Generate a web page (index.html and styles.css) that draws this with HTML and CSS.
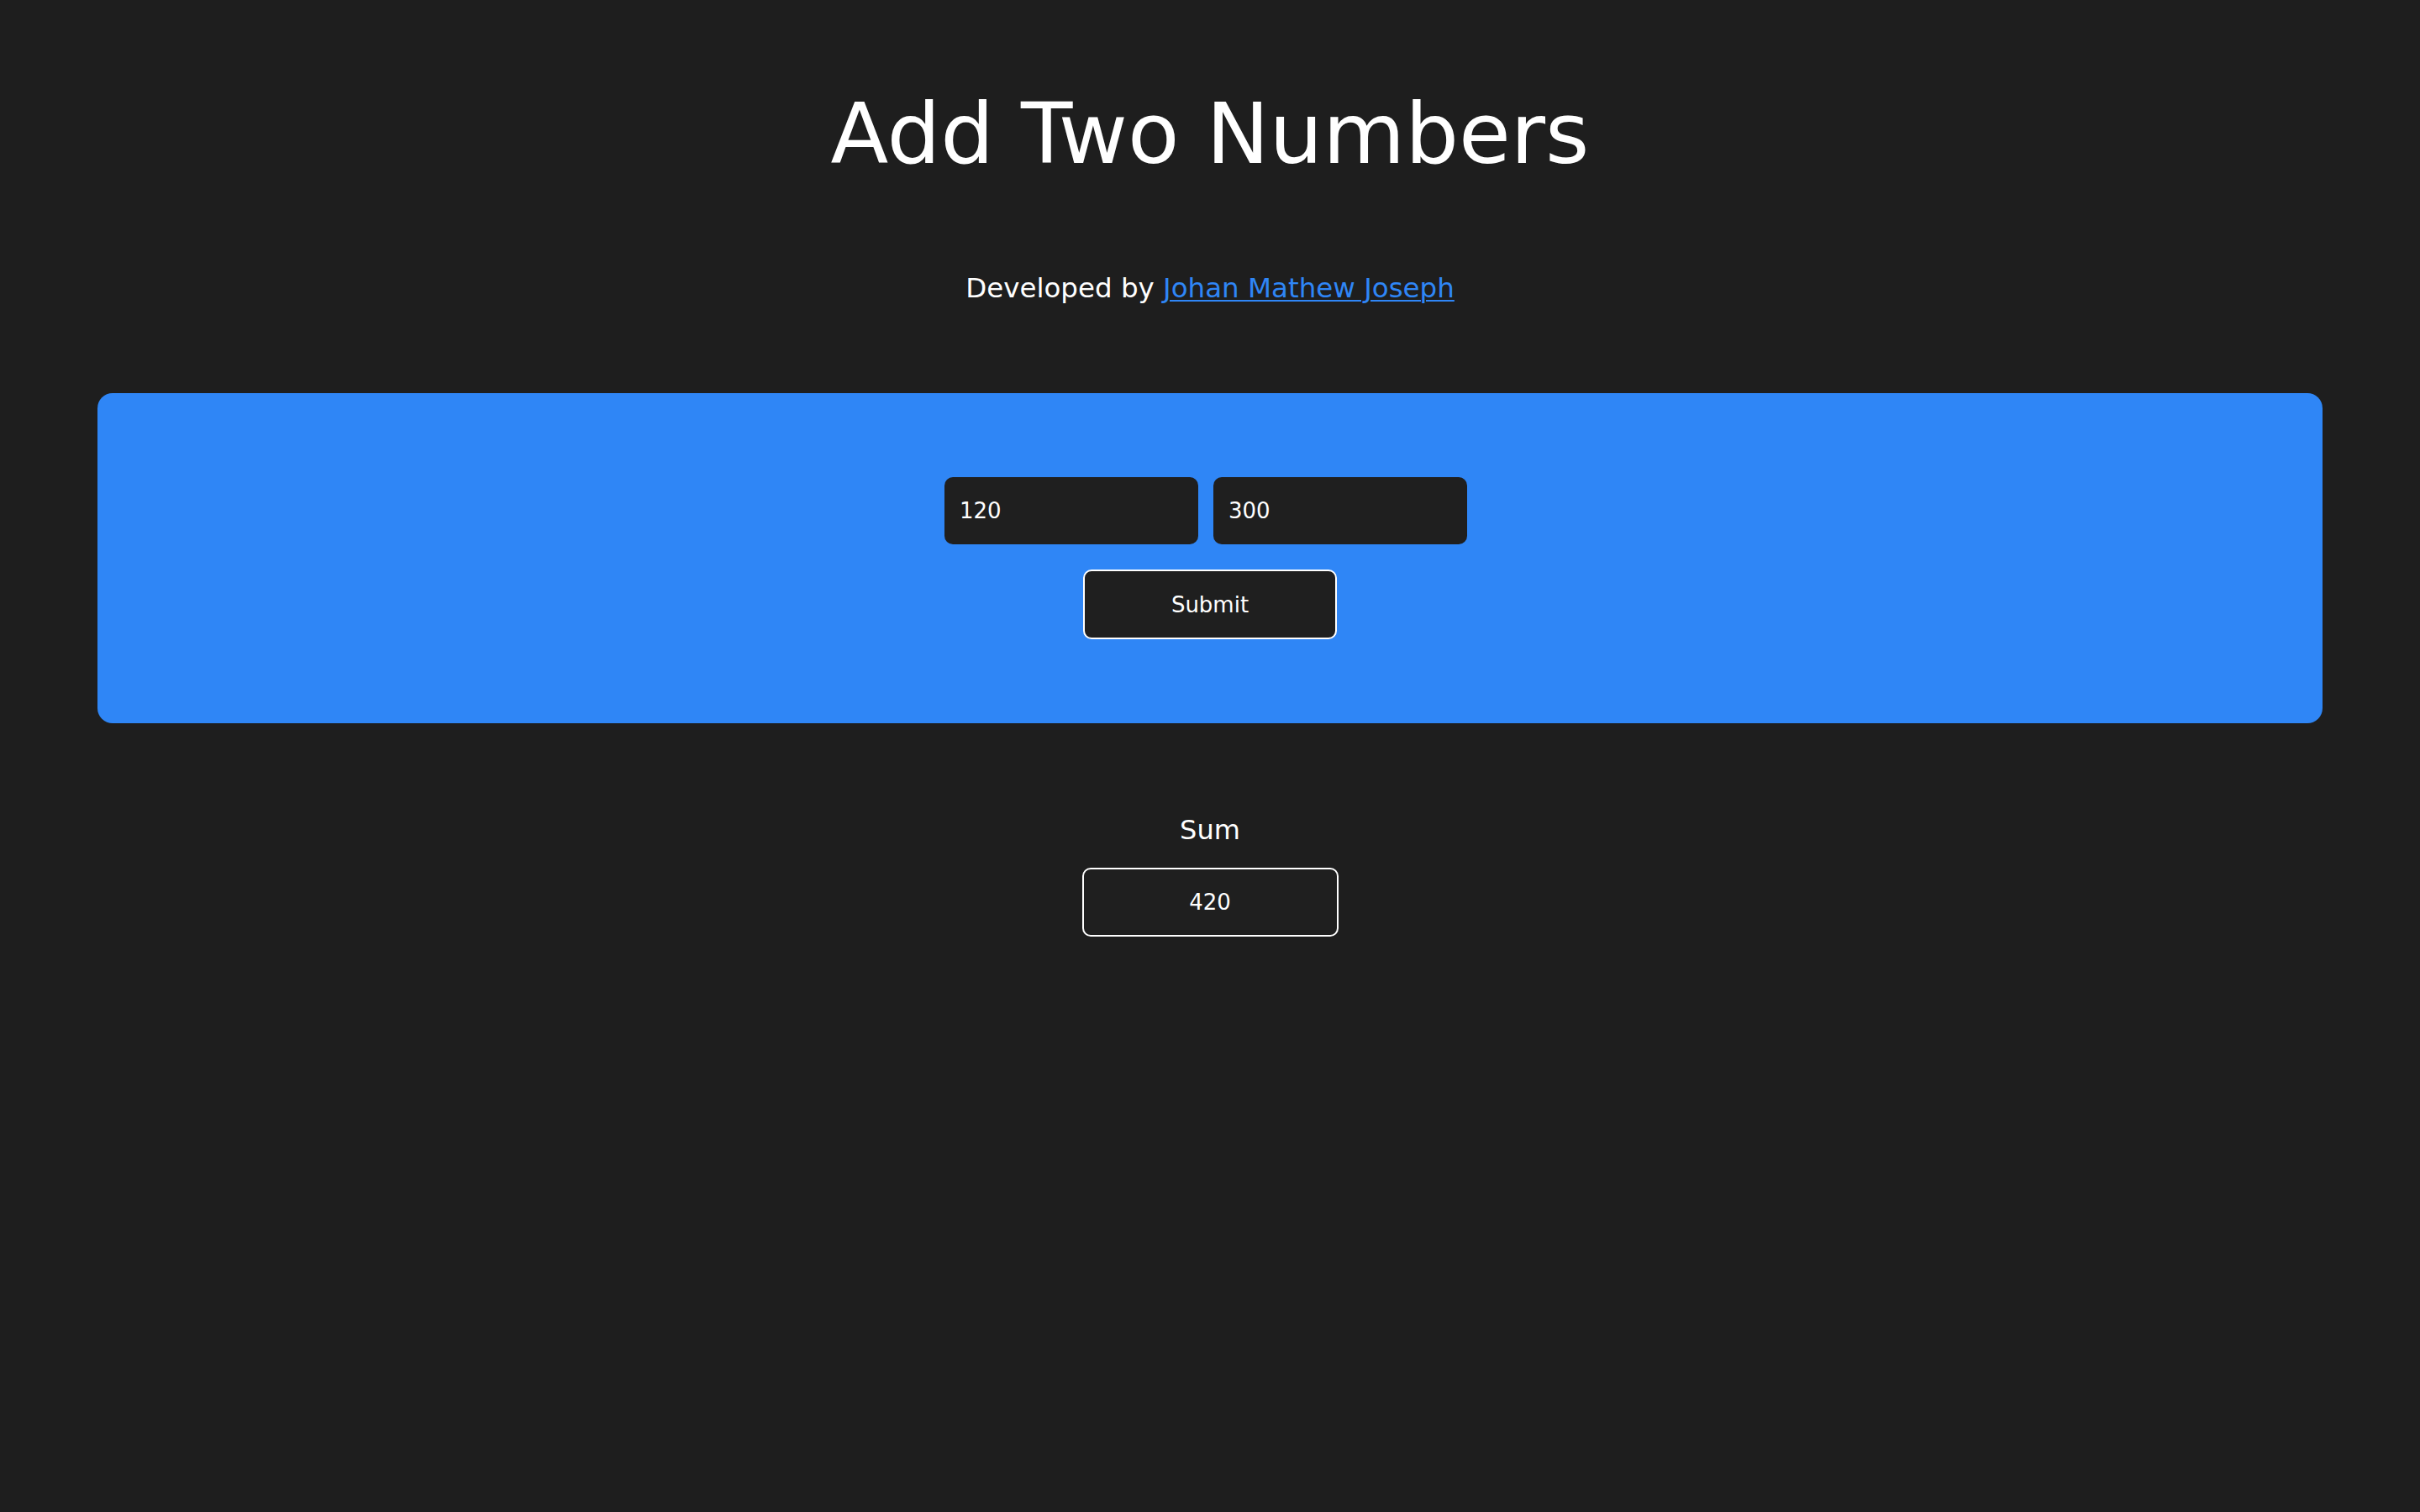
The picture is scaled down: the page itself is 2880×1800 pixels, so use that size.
FILE: index.html
```html
<!DOCTYPE html>
<html lang="en">
<head>
<meta charset="utf-8">
<title>Add Two Numbers</title>
<link rel="stylesheet" href="styles.css">
</head>
<body>
<main class="page">
  <h1 class="title">Add Two Numbers</h1>
  <p class="credit">Developed by <a class="credit-link" href="#">Johan Mathew Joseph</a></p>
  <section class="panel">
    <div class="fields">
      <input class="field" type="text" value="120">
      <input class="field" type="text" value="300">
    </div>
    <button class="submit" type="button">Submit</button>
  </section>
  <section class="result">
    <div class="result-label">Sum</div>
    <div class="result-box">420</div>
  </section>
</main>
</body>
</html>
```

FILE: styles.css
```css
html, body {
  margin: 0;
  padding: 0;
  background: #1e1e1e;
}

body {
  font-family: "DejaVu Sans", "Noto Sans", sans-serif;
  color: #ffffff;
  min-height: 1800px;
}

.page {
  display: flex;
  flex-direction: column;
  align-items: center;
  padding: 100px 116px 0;
}

.title {
  margin: 0;
  font-size: 100.5px;
  line-height: 120px;
  font-weight: 400;
  color: #ffffff;
}

.credit {
  margin: 103px 0 0;
  font-size: 32.5px;
  line-height: 40px;
  font-weight: 400;
}

.credit-link {
  color: #2f86f6;
  text-decoration: underline;
  text-decoration-thickness: 2px;
  text-underline-offset: 3px;
}

.panel {
  align-self: stretch;
  margin-top: 105px;
  background: #2f86f6;
  border-radius: 18px;
  padding: 100px 0;
  display: flex;
  flex-direction: column;
  align-items: center;
  gap: 30px;
}

.fields {
  display: flex;
  gap: 18px;
  padding-right: 10px;
}

.field {
  box-sizing: border-box;
  width: 302px;
  height: 80px;
  border: none;
  border-radius: 10px;
  background: #1f1f1f;
  color: #ffffff;
  font-family: "DejaVu Sans", "Noto Sans", sans-serif;
  font-size: 26px;
  padding: 0 18px;
  outline: none;
}

.submit {
  box-sizing: border-box;
  width: 302px;
  height: 83px;
  border: 2px solid #ffffff;
  border-radius: 10px;
  background: #1f1f1f;
  color: #ffffff;
  font-family: "DejaVu Sans", "Noto Sans", sans-serif;
  font-size: 26px;
  padding: 0;
}

.result {
  margin-top: 107px;
  display: flex;
  flex-direction: column;
  align-items: center;
  gap: 25px;
}

.result-label {
  font-size: 32px;
  line-height: 40px;
}

.result-box {
  box-sizing: border-box;
  width: 305px;
  height: 82px;
  border: 2px solid #ffffff;
  border-radius: 10px;
  background: #1f1f1f;
  display: flex;
  align-items: center;
  justify-content: center;
  font-size: 26px;
}
```
